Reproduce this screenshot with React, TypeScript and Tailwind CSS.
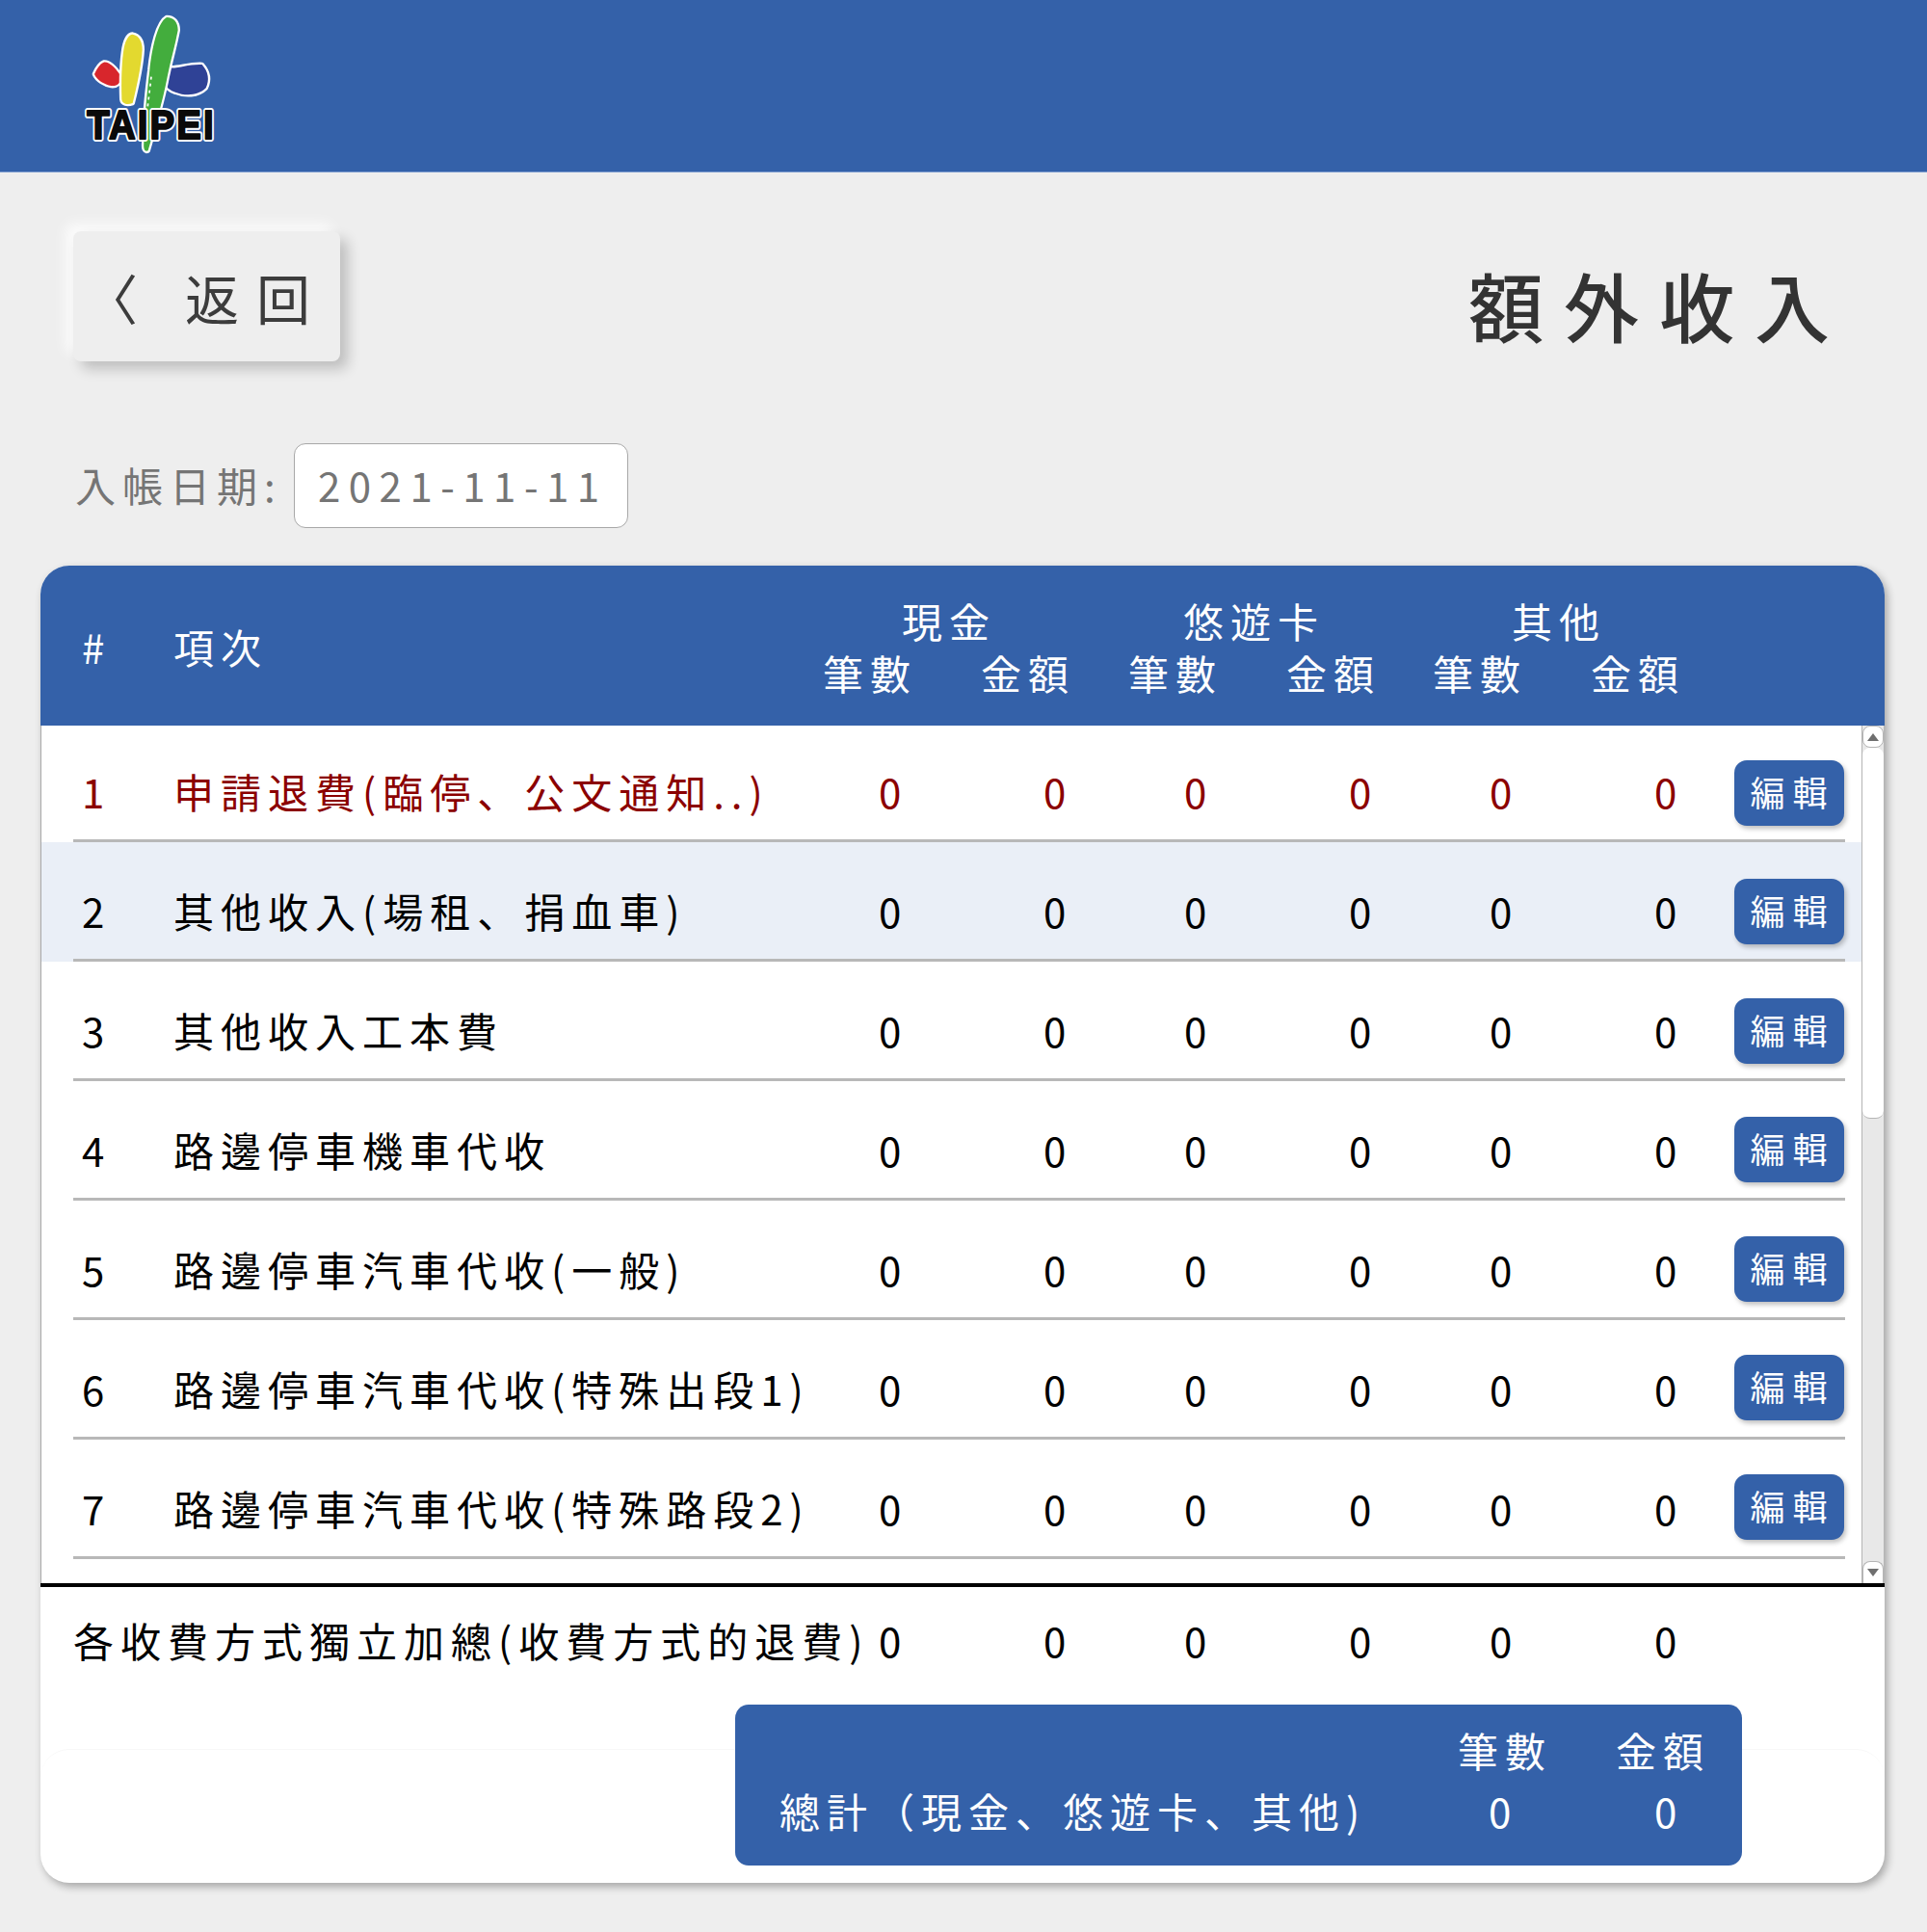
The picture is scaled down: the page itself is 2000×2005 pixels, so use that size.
import { ReactNode } from 'react';

const ROWS = [
  '申請退費(臨停、公文通知..)',
  '其他收入(場租、捐血車)',
  '其他收入工本費',
  '路邊停車機車代收',
  '路邊停車汽車代收(一般)',
  '路邊停車汽車代收(特殊出段1)',
  '路邊停車汽車代收(特殊路段2)',
];

const AMOUNT_COLS = [0, 1, 2, 3, 4, 5];

function TaipeiLogo() {
  return (
    <svg viewBox="260 40 450 450" className="w-[150px] h-[150px]" aria-label="TAIPEI">
      <g stroke="#fff" strokeWidth="14" strokeLinejoin="round" paintOrder="stroke">
        <path fill="#d8262c" d="M322 195C340 192 360 215 377 240C375 258 365 270 345 268C325 265 300 250 293 232C300 215 310 200 322 195Z" />
        <path fill="#2f4296" d="M525 212C555 215 585 200 628 202C648 225 652 250 640 275C615 300 575 300 545 288C530 283 515 272 510 258C512 240 518 225 525 212Z" />
        <path fill="#e3d92f" d="M412 108C432 112 442 130 442 155C440 200 425 270 412 322C395 328 380 325 378 310C376 250 378 190 385 150C390 125 400 108 412 108Z" />
        <path fill="#43ad3d" d="M518 55C540 55 553 70 553 95C545 140 530 190 520 240C505 320 480 400 460 470C450 475 445 465 447 445C447 400 455 300 465 220C472 150 490 70 518 55Z" />
      </g>
      <path stroke="#fff" strokeWidth="5" strokeDasharray="9 12" fill="none" d="M470 240L458 340" />
      <text
        x="270"
        y="433"
        textLength="400"
        lengthAdjust="spacingAndGlyphs"
        fontFamily="'Liberation Sans', sans-serif"
        fontWeight="700"
        fontSize="128"
        fill="#0a0a0a"
        stroke="#fff"
        strokeWidth="18"
        strokeLinejoin="round"
      >
        TAIPEI
      </text>
      <text
        x="270"
        y="433"
        textLength="400"
        lengthAdjust="spacingAndGlyphs"
        fontFamily="'Liberation Sans', sans-serif"
        fontWeight="700"
        fontSize="128"
        fill="#0a0a0a"
        stroke="#0a0a0a"
        strokeWidth="6"
        strokeLinejoin="round"
      >
        TAIPEI
      </text>
    </svg>
  );
}

function ScrollArrow({ down }: { down?: boolean }) {
  return (
    <div className={`h-[23px] bg-white border border-[#b5b5b5] flex items-center justify-center ${down ? 'rounded-t-[8px] border-b-0' : 'rounded-b-[8px] rounded-t-[8px]'}`}>
      <svg viewBox="0 0 12 8" className="w-[14px] h-[8px]" fill="#6f6f6f">
        <path d={down ? 'M0 0H12L6 8Z' : 'M6 0L12 8H0Z'} />
      </svg>
    </div>
  );
}

function Amounts() {
  return (
    <>
      {AMOUNT_COLS.map((c) => (
        <span key={c} className="pb-[3px]">0</span>
      ))}
    </>
  );
}

function Row({ index, label, first }: { index: number; label: string; first?: boolean }) {
  const red = index === 1;
  const highlighted = index === 2;
  // the edit buttons drift up slightly against the row pitch
  const buttonShift = Math.round((index - 2) * -0.5);
  return (
    <div className={`flex flex-col justify-between ${first ? 'h-[121px] pt-[35px]' : 'h-[124px] pt-[38px]'} ${highlighted ? 'bg-[#eaeff7]' : ''}`}>
      <div className={`grid grid-cols-[137px_732px_171px_146px_171px_146px_171px_83px_114px] items-center h-[68px] ${red ? 'text-[#8b0000]' : 'text-black'}`}>
        <span className="pl-[42px] pb-[3px]">{index}</span>
        <span className="whitespace-nowrap pb-[3px]">{label}</span>
        <Amounts />
        <button
          className="h-[68px] rounded-[13px] bg-[#3461a9] text-white text-[36px] tracking-[8px] pl-[7px] pb-[5px] leading-none shadow-[2px_3px_5px_rgba(0,0,0,0.25)] [font-family:inherit]"
          style={{ transform: `translateY(${buttonShift}px)` }}
        >
          編輯
        </button>
      </div>
      <div className="ml-[33px] w-[1839px] h-[3px] bg-[#b8b8b8]" />
    </div>
  );
}

function Panel({ children }: { children: ReactNode }) {
  return (
    <section className="relative mx-[42px] w-[1914px] h-[1367px] rounded-[30px] bg-white shadow-[3px_4px_8px_rgba(0,0,0,0.3)]">
      {children}
    </section>
  );
}

export default function App() {
  return (
    <div className="min-h-[2005px] bg-[#eeeeee] [font-family:'Noto_Sans_CJK_JP',sans-serif] text-[42px] tracking-[7px] overflow-hidden">
      <header className="h-[179px] bg-[#3461a9] pl-[87px] pt-[13px] border-b border-[#7f9fd0]">
        <TaipeiLogo />
      </header>

      <div className="flex justify-between pl-[76px] pr-[80px] pt-[61px]">
        <button className="w-[277px] h-[135px] rounded-[8px] bg-[#eeeeee] text-[#3c3c3c] text-[56px] tracking-[18px] flex items-center pl-[33px] shadow-[8px_8px_14px_rgba(0,0,0,0.2),-8px_-8px_14px_rgba(255,255,255,0.8)] [font-family:inherit]">
          <span className="w-[105px] -ml-[22px] text-left">〈</span>
          返回
        </button>
        <h1 className="text-[78px] font-medium text-[#333333] tracking-[21px] leading-none pt-[37px]">額外收入</h1>
      </div>

      <div className="flex items-center pl-[78px] mt-[85px] text-[#757575]">
        <span className="w-[227px] whitespace-nowrap pb-[3px]">入帳日期:</span>
        <div className="w-[347px] h-[88px] rounded-[12px] border border-[#a8a8a8] bg-white flex items-center pl-[24px] pb-[3px] tracking-[8.5px]">
          2021-11-11
        </div>
      </div>

      <div className="mt-[39px]">
        <Panel>
          <div className="h-[166px] rounded-t-[30px] bg-[#3461a9] text-white pt-[29px] pl-[1px] grid grid-cols-[137px_674px_164px_153px_164px_152px_164px_1fr] grid-rows-[54px_54px] items-center">
            <span className="row-span-2 pl-[42px]">#</span>
            <span className="row-span-2">項次</span>
            <span className="col-span-2 pl-[82px]">現金</span>
            <span className="col-span-2 pl-[57px]">悠遊卡</span>
            <span className="col-span-2 pl-[82px]">其他</span>
            <span className="col-start-3">筆數</span>
            <span>金額</span>
            <span>筆數</span>
            <span>金額</span>
            <span>筆數</span>
            <span>金額</span>
          </div>

          <div className="flex h-[894px] border-b-[4px] border-black">
            <div className="w-[1890px] border-l border-[#aaaaaa]">
              {ROWS.map((label, i) => (
                <Row key={label} index={i + 1} label={label} first={i === 0} />
              ))}
            </div>
            <div className="w-[24px] flex flex-col border-x border-[#b5b5b5] bg-[#e8e8e8]">
              <ScrollArrow />
              <div className="h-[385px] bg-white rounded-[8px] border-b border-[#b5b5b5]" />
              <div className="flex-1" />
              <ScrollArrow down />
            </div>
          </div>

          <div className="grid grid-cols-[836px_171px_146px_171px_146px_171px_1fr] items-center h-[112px] mb-[10px] pl-[34px] text-black">
            <span className="whitespace-nowrap pb-[3px]">各收費方式獨立加總(收費方式的退費)</span>
            <Amounts />
          </div>

          {/* faint second layer behind the totals box */}
          <div className="absolute left-0 right-0 bottom-0 h-[139px] rounded-[30px] border-t border-[#f8f8f8]" />

          <div className="relative ml-[721px] w-[1045px] h-[167px] rounded-[14px] bg-[#3461a9] text-white pt-[21px] grid grid-cols-[782px_172px_91px] grid-rows-[50px_50px] gap-y-[13px] items-center">
            <span />
            <span className="-ml-[32px] whitespace-nowrap">筆數</span>
            <span className="-ml-[40px] whitespace-nowrap">金額</span>
            <span className="pl-[46px] whitespace-nowrap">總計（現金、悠遊卡、其他)</span>
            <span>0</span>
            <span>0</span>
          </div>
        </Panel>
      </div>
    </div>
  );
}
